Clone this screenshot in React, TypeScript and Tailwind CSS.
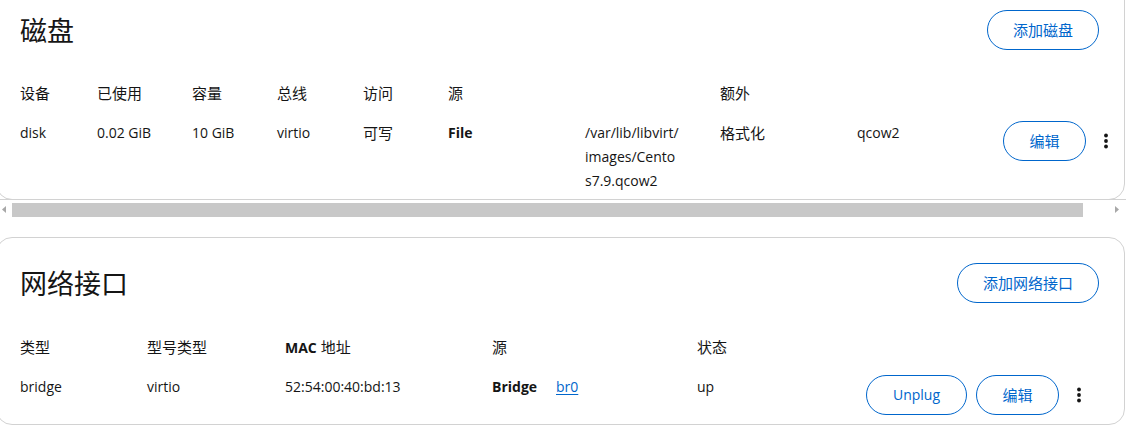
import React from "react";

function Kebab() {
  return (
    <button className="flex h-10 w-7 shrink-0 items-center justify-center text-[#151515]">
      <svg width="6" height="16" viewBox="0 0 6 16" fill="currentColor">
        <circle cx="3" cy="2.5" r="1.9" />
        <circle cx="3" cy="8" r="1.9" />
        <circle cx="3" cy="13.5" r="1.9" />
      </svg>
    </button>
  );
}

function OutlineButton({ label, className = "" }: { label: string; className?: string }) {
  return (
    <button
      className={`flex h-10 shrink-0 items-center justify-center rounded-full border border-[#0066cc] text-[15px] text-[#0066cc] ${className}`}
    >
      {label}
    </button>
  );
}

function CardHeader({ title, action, actionWidth }: { title: string; action: string; actionWidth: string }) {
  return (
    <div className="flex h-10 items-center justify-between pr-px">
      <h2 className="text-[27px] leading-none">{title}</h2>
      <OutlineButton label={action} className={actionWidth} />
    </div>
  );
}

function DiskCard() {
  return (
    <div className="mt-[-16px] ml-[-4px] w-[1129px] rounded-2xl border border-[#d2d2d2] pt-[25px] pr-6 pb-[6px] pl-[23px]">
      <CardHeader title="磁盘" action="添加磁盘" actionWidth="w-[112px]" />

      <div className="mt-[31px] flex text-[15px] leading-6 *:shrink-0">
        <div className="w-[77px]">设备</div>
        <div className="w-[95px]">已使用</div>
        <div className="w-[85px]">容量</div>
        <div className="w-[86px]">总线</div>
        <div className="w-[85px]">访问</div>
        <div className="w-[272px]">源</div>
        <div className="w-[283px]">额外</div>
      </div>

      <div className="mt-4 flex items-start text-sm leading-6 *:shrink-0">
        <div className="w-[77px]">disk</div>
        <div className="w-[95px]">0.02 GiB</div>
        <div className="w-[85px]">10 GiB</div>
        <div className="w-[86px]">virtio</div>
        <div className="w-[85px] text-[15px]">可写</div>
        <div className="flex w-[272px]">
          <div className="w-[137px] shrink-0 font-bold">File</div>
          <div className="w-[96px] break-all">/var/lib/libvirt/images/Centos7.9.qcow2</div>
        </div>
        <div className="flex w-[283px]">
          <div className="w-[137px] shrink-0 text-[15px]">格式化</div>
          <div>qcow2</div>
        </div>
        <div className="flex items-center gap-1.5">
          <OutlineButton label="编辑" className="w-[83px]" />
          <Kebab />
        </div>
      </div>
    </div>
  );
}

function ScrollBar() {
  return (
    <div className="relative -mt-px flex h-[19px] w-[1126px] items-center border-t border-[#d2d2d2]">
      <svg className="ml-[2px] shrink-0" width="4" height="7" viewBox="0 0 4 7" fill="#a8a8a8">
        <path d="M4 0 L0 3.5 L4 7 Z" />
      </svg>
      <div className="mt-px ml-[6px] h-[14px] w-[1071px] shrink-0 bg-[#c8c8c8]" />
      <svg className="ml-[32px] shrink-0" width="4" height="7" viewBox="0 0 4 7" fill="#a8a8a8">
        <path d="M0 0 L4 3.5 L0 7 Z" />
      </svg>
    </div>
  );
}

function NetworkCard() {
  return (
    <div className="mt-[19px] ml-[-4px] w-[1129px] rounded-2xl border border-[#d2d2d2] pt-[25px] pr-6 pb-[9px] pl-[23px]">
      <CardHeader title="网络接口" action="添加网络接口" actionWidth="w-[142px]" />

      <div className="mt-8 flex text-[15px] leading-6 *:shrink-0">
        <div className="w-[127px]">类型</div>
        <div className="w-[138px]">型号类型</div>
        <div className="w-[207px]">
          <span className="text-sm font-bold">MAC</span> 地址
        </div>
        <div className="w-[205px]">源</div>
        <div className="w-[169px]">状态</div>
      </div>

      <div className="mt-4 flex items-start text-sm leading-6 *:shrink-0">
        <div className="w-[127px]">bridge</div>
        <div className="w-[138px]">virtio</div>
        <div className="w-[207px]">52:54:00:40:bd:13</div>
        <div className="flex w-[205px]">
          <div className="w-[64px] shrink-0 font-bold">Bridge</div>
          <a className="text-[#0066cc] underline underline-offset-2">br0</a>
        </div>
        <div className="w-[169px]">up</div>
        <div className="flex items-center">
          <OutlineButton label="Unplug" className="w-[101px] !text-sm" />
          <OutlineButton label="编辑" className="ml-[9px] w-[83px]" />
          <div className="ml-1.5">
            <Kebab />
          </div>
        </div>
      </div>
    </div>
  );
}

export default function App() {
  return (
    <div className="h-[432px] w-[1137px] overflow-hidden bg-white font-['Open_Sans','Noto_Sans_CJK_SC',sans-serif] text-[#151515]">
      <DiskCard />
      <ScrollBar />
      <NetworkCard />
    </div>
  );
}
